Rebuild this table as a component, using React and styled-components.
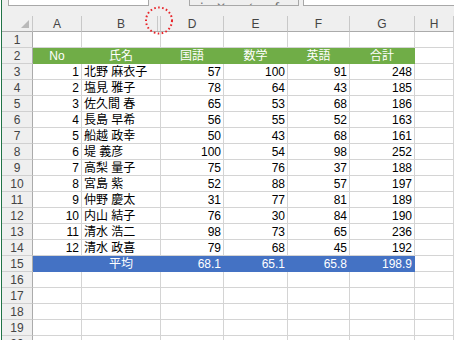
import React from 'react';
import styled, { createGlobalStyle } from 'styled-components';

const Global = createGlobalStyle`
  html, body { margin: 0; padding: 0; background: #fff; overflow: hidden; }
  body { font-family: "Liberation Sans", "Noto Sans CJK JP", sans-serif; }
`;

const Window = styled.div`
  position: relative;
  width: 454px;
  height: 340px;
  overflow: hidden;
  box-sizing: border-box;
  padding-left: 1px;
  background: #fff;
`;

const Frame = styled.div`
  height: 100%;
  border-left: 1px solid #217346;
  display: flex;
  flex-direction: column;
  background: #efefef;
`;

const FormulaStrip = styled.div`
  height: 16px;
  flex-shrink: 0;
  display: flex;
  align-items: flex-start;
  background: #efefef;
`;

const Box = styled.div`
  box-sizing: border-box;
  height: 6px;
  margin-left: ${p => p.$ml}px;
  width: ${p => (p.$w ? `${p.$w}px` : 'auto')};
  flex: ${p => (p.$w ? '0 0 auto' : '1 1 auto')};
  background: ${p => (p.$plain ? 'transparent' : '#fff')};
  border: 1px solid #a8a8a8;
  border-top: none;
  border-right: ${p => (p.$noRight ? 'none' : '1px solid #a8a8a8')};
  display: flex;
  align-items: flex-end;
  overflow: hidden;
`;

const FxGlyph = styled.span`
  font-family: ${p => (p.$serif ? '"Liberation Serif", serif' : '"DejaVu Sans", sans-serif')};
  font-style: ${p => (p.$serif ? 'italic' : 'normal')};
  font-weight: ${p => (p.$serif ? 'bold' : 'normal')};
  font-size: 12px;
  line-height: 12px;
  color: #777;
  margin-left: ${p => p.$ml}px;
  margin-bottom: -8px;
`;

const Sheet = styled.div`
  display: grid;
  grid-template-columns: 31px 49px 79px 63px 64px 62px 65px 1fr;
  grid-auto-rows: 16px;
  background: #fff;
`;

const Corner = styled.div`
  box-sizing: border-box;
  background: #efefef;
  border-right: 1px solid #c8c8c8;
  border-bottom: 1px solid #ababab;
  display: flex;
  align-items: flex-end;
  justify-content: flex-end;
  padding: 0 3px 3px 0;
`;

const Triangle = styled.div`
  width: 0;
  height: 0;
  border-left: 8px solid transparent;
  border-bottom: 8px solid #b9b9b9;
`;

const ColHead = styled.div`
  box-sizing: border-box;
  background: #efefef;
  border-right: 1px solid #c8c8c8;
  border-bottom: 1px solid #ababab;
  box-shadow: ${p => (p.$hiddenAfter ? 'inset -2px 0 0 #efefef, inset -3px 0 0 #c8c8c8' : 'none')};
  display: flex;
  align-items: center;
  justify-content: center;
  font-size: 12px;
  color: #444;
  line-height: 1;
  padding-top: 1px;
`;

const RowHead = styled.div`
  box-sizing: border-box;
  background: #efefef;
  border-right: 1px solid #ababab;
  border-bottom: 1px solid #d0d0d0;
  display: flex;
  align-items: flex-end;
  justify-content: center;
  font-size: 12px;
  line-height: 12px;
  color: #444;
  padding-bottom: 1px;
`;

const Cell = styled.div`
  box-sizing: border-box;
  background: ${p => p.$fill || '#fff'};
  border-right: 1px solid ${p => p.$fill || '#d4d4d4'};
  border-bottom: 1px solid ${p => p.$fill || '#d4d4d4'};
  color: ${p => (p.$fill ? '#fff' : '#000')};
  display: flex;
  align-items: flex-end;
  justify-content: ${p => (p.$align === 'right' ? 'flex-end' : p.$align === 'center' ? 'center' : 'flex-start')};
  padding: 0 2px 1px 2px;
  font-size: 12px;
  line-height: 12px;
  white-space: nowrap;
  overflow: hidden;
`;

const Annotation = styled.svg`
  position: absolute;
  left: 144px;
  top: 5px;
`;

const GREEN = '#70ad47';
const BLUE = '#4472c4';

const data = [
  [1, '北野 麻衣子', 57, 100, 91, 248],
  [2, '塩見 雅子', 78, 64, 43, 185],
  [3, '佐久間 春', 65, 53, 68, 186],
  [4, '長島 早希', 56, 55, 52, 163],
  [5, '船越 政幸', 50, 43, 68, 161],
  [6, '堤 義彦', 100, 54, 98, 252],
  [7, '高梨 量子', 75, 76, 37, 188],
  [8, '宮島 紫', 52, 88, 57, 197],
  [9, '仲野 慶太', 31, 77, 81, 189],
  [10, '内山 結子', 76, 30, 84, 190],
  [11, '清水 浩二', 98, 73, 65, 236],
  [12, '清水 政喜', 79, 68, 45, 192],
];

const cols = ['A', 'B', 'D', 'E', 'F', 'G', 'H'];

export default function App() {
  const rows = [];
  // row 1
  rows.push(
    <React.Fragment key="r1">
      <RowHead>1</RowHead>
      {cols.map(c => <Cell key={c} />)}
    </React.Fragment>
  );
  // row 2 header
  const heads = ['No', '氏名', '国語', '数学', '英語', '合計'];
  rows.push(
    <React.Fragment key="r2">
      <RowHead>2</RowHead>
      {heads.map(h => (
        <Cell key={h} $fill={GREEN} $align="center">{h}</Cell>
      ))}
      <Cell />
    </React.Fragment>
  );
  data.forEach((d, i) => {
    rows.push(
      <React.Fragment key={`d${i}`}>
        <RowHead>{i + 3}</RowHead>
        <Cell $align="right">{d[0]}</Cell>
        <Cell>{d[1]}</Cell>
        <Cell $align="right">{d[2]}</Cell>
        <Cell $align="right">{d[3]}</Cell>
        <Cell $align="right">{d[4]}</Cell>
        <Cell $align="right">{d[5]}</Cell>
        <Cell />
      </React.Fragment>
    );
  });
  rows.push(
    <React.Fragment key="r15">
      <RowHead>15</RowHead>
      <Cell $fill={BLUE} />
      <Cell $fill={BLUE} $align="center">平均</Cell>
      <Cell $fill={BLUE} $align="right">68.1</Cell>
      <Cell $fill={BLUE} $align="right">65.1</Cell>
      <Cell $fill={BLUE} $align="right">65.8</Cell>
      <Cell $fill={BLUE} $align="right">198.9</Cell>
      <Cell />
    </React.Fragment>
  );
  for (let r = 16; r <= 20; r++) {
    rows.push(
      <React.Fragment key={`e${r}`}>
        <RowHead>{r}</RowHead>
        {cols.map(c => <Cell key={c} />)}
      </React.Fragment>
    );
  }

  return (
    <>
      <Global />
      <Window>
        <Frame>
          <FormulaStrip>
            <Box $ml={6} $w={141} />
            <Box $ml={40} $w={110} $plain>
              <FxGlyph $ml={6}>⋮</FxGlyph>
              <FxGlyph $ml={8}>✕</FxGlyph>
              <FxGlyph $ml={18}>✓</FxGlyph>
              <FxGlyph $ml={20} $serif>fx</FxGlyph>
            </Box>
            <Box $ml={4} $noRight />
          </FormulaStrip>
          <Sheet>
            <Corner><Triangle /></Corner>
            {cols.map(c => (
              <ColHead key={c} $hiddenAfter={c === 'B'}>{c}</ColHead>
            ))}
            {rows}
          </Sheet>
        </Frame>
        <Annotation width="30" height="30" viewBox="0 0 30 30">
          <circle cx="15" cy="15.5" r="13" fill="none" stroke="#e8252a" strokeWidth="2" strokeDasharray="1.6 2.4" />
        </Annotation>
      </Window>
    </>
  );
}
